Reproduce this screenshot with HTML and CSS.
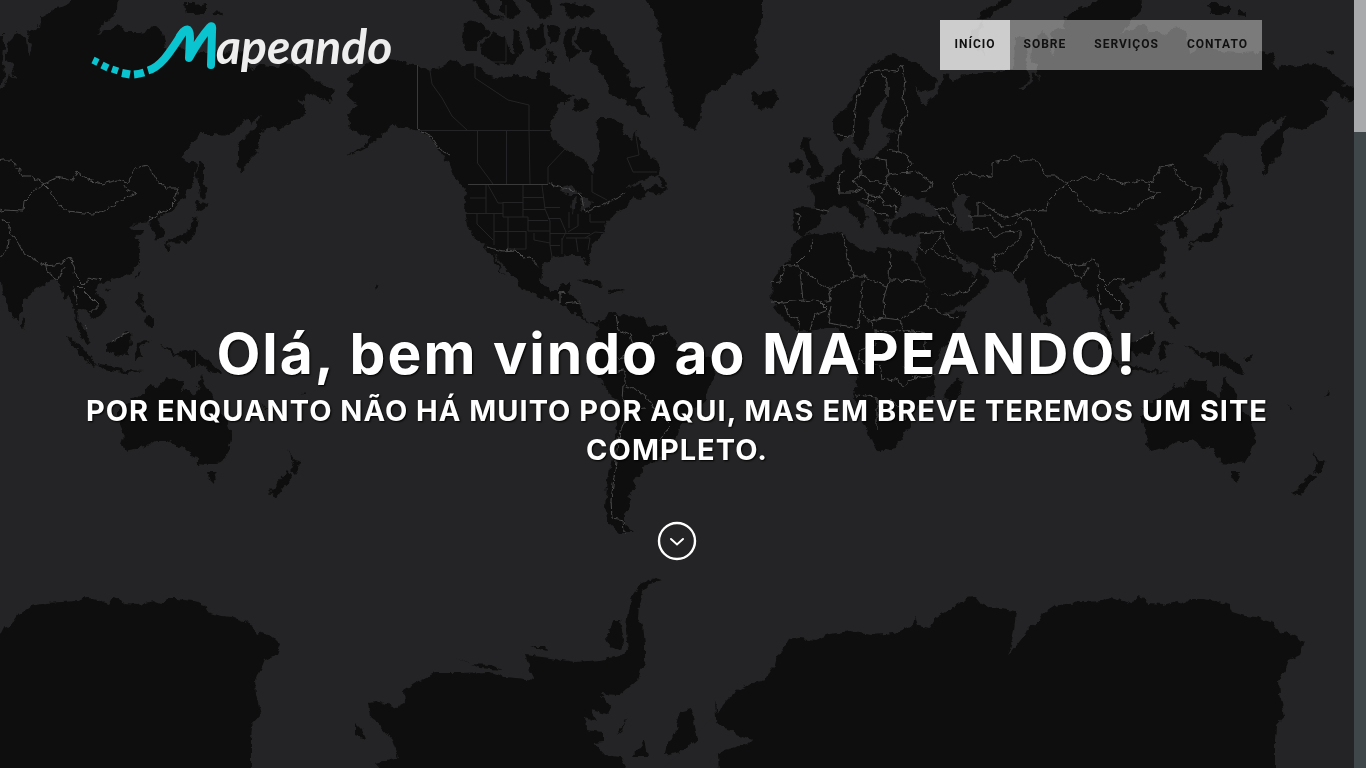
FILE: index.html
```html
<!DOCTYPE html>
<html lang="pt-BR">
<head>
<meta charset="utf-8">
<title>Mapeando</title>
<meta name="viewport" content="width=device-width, initial-scale=1">
<link rel="stylesheet" href="styles.css">
</head>
<body>
<div class="page">
  <div class="hero">
    <svg class="map" viewBox="0 0 1354 768" preserveAspectRatio="xMidYMin slice" aria-hidden="true">
      <defs>
        <filter id="coast" filterUnits="userSpaceOnUse" x="-20" y="-20" width="1400" height="810" color-interpolation-filters="sRGB">
          <feTurbulence type="fractalNoise" baseFrequency="0.13" numOctaves="3" seed="4" result="n"/>
          <feDisplacementMap in="SourceGraphic" in2="n" scale="8" xChannelSelector="R" yChannelSelector="G"/>
        </filter>
        <filter id="edge" filterUnits="userSpaceOnUse" x="-20" y="-20" width="1400" height="810" color-interpolation-filters="sRGB">
          <feTurbulence type="fractalNoise" baseFrequency="0.16" numOctaves="2" seed="9" result="n"/>
          <feDisplacementMap in="SourceGraphic" in2="n" scale="6" xChannelSelector="R" yChannelSelector="G"/>
        </filter>
        <g id="world" class="land">
          <!-- Eurasia -->
          <path d="M893 54L907 60 917 64 925 70 936 79 934 89 925 92 915 88 912 84 918 92 920 102 925 105 930 98 935 95 939 90 941 85 944 80 943 74 950 75 952 83 958 78 965 74 975 73 985 72 995 72 1005 70 1014 70 1015 37 1026 36 1028 48 1026 66 1030 74 1027 84 1018 88 1024 90 1032 82 1034 72 1040 80 1036 66 1030 60 1032 42 1042 32 1050 38 1052 58 1056 46 1050 32 1063 28 1064 18 1078 10 1092 4 1100-4 1143-4 1142 10 1132 20 1120 35 1135 28 1142 22 1150 32 1160 32 1168 34 1172 28 1180 27 1186 32 1188 42 1190 53 1195 52 1200 47 1210 48 1225 52 1240 53 1262 52 1273 55 1274 64 1278 70 1285 65 1295 66 1302 67 1305 62 1315 63 1325 67 1335 75 1345 85 1350 84 1359 93 1352 103 1343 97 1333 92 1327 100 1320 101 1328 107 1328 115 1318 120 1310 125 1302 130 1298 127 1290 128 1283 132 1283 142 1280 155 1270 165 1265 175 1262 160 1262 147 1270 137 1280 127 1286 115 1280 118 1275 124 1270 120 1262 125 1257 134 1250 136 1240 134 1225 134 1217 142 1205 157 1212 162 1218 162 1221 168 1218 182 1207 200 1195 210 1188 213 1181 218 1186 228 1187 237 1180 240 1177 230 1175 222 1165 223 1155 226 1163 219 1154 226 1158 230 1168 230 1160 237 1165 250 1164 260 1157 270 1145 278 1133 281 1127 284 1122 283 1120 290 1128 300 1130 308 1125 315 1117 320 1112 312 1106 308 1102 310 1101 318 1108 328 1113 338 1112 345 1105 335 1100 325 1099 310 1094 295 1088 298 1083 285 1078 280 1070 283 1058 292 1047 300 1047 310 1040 322 1033 310 1027 292 1026 280 1020 284 1012 276 1005 270 995 271 985 270 978 265 970 262 960 258 955 254 958 262 965 272 975 277 979 268 985 277 988 281 980 293 968 303 955 309 943 313 940 308 930 290 922 275 915 262 917 255 919 245 920 233 912 237 905 234 895 235 890 230 893 220 900 217 915 213 930 216 940 215 935 208 925 200 928 194 918 200 905 195 901 203 899 212 895 216 885 218 890 228 886 235 880 230 876 220 873 212 866 205 860 200 856 200 862 208 870 218 863 222 862 228 858 222 850 212 845 205 838 208 830 207 822 215 818 224 810 232 803 236 795 232 793 222 794 208 805 207 815 208 816 200 812 191 807 187 815 184 822 180 830 174 835 168 842 165 842 155 845 148 850 145 852 155 862 159 875 158 880 150 890 143 888 135 895 131 903 129 890 130 882 128 880 115 888 103 888 95 882 98 876 108 870 118 868 135 862 150 857 150 853 137 848 137 840 141 834 133 834 117 845 110 855 95 862 77 870 66 880 60Z"/>
          <!-- Africa and Madagascar -->
          <path d="M803 236L830 234 843 232 848 240 860 248 872 253 878 247 890 249 908 252 913 256 912 260 920 275 932 293 940 308 945 314 958 312 966 311 960 325 950 340 938 355 932 370 935 385 934 395 920 405 912 415 911 425 903 435 895 447 880 450 873 445 867 430 858 410 853 395 858 375 852 360 848 350 845 335 838 328 825 328 810 331 800 332 790 325 780 315 772 302 771 283 780 268 790 258 793 245ZM961 380L962 390 955 402 948 402 944 395 950 385Z"/>
          <!-- South America -->
          <path d="M600 322L610 312 625 315 640 317 650 325 665 328 673 335 676 348 690 352 705 355 717 363 715 375 708 388 705 402 692 410 685 420 680 430 670 445 660 455 655 463 642 465 640 475 633 480 635 490 627 495 632 500 625 515 625 525 634 533 620 533 608 522 605 505 608 480 613 450 618 420 617 400 605 388 595 370 594 360 600 345 597 335Z"/>
          <!-- North America -->
          <path d="M370 62L385 58 405 62 418 65 430 71 440 68 455 60 462 67 475 65 490 76 505 79 515 72 525 78 535 78 540 70 550 72 550 84 562 90 572 96 565 104 560 103 558 110 552 120 550 130 552 140 562 147 575 154 585 158 588 170 592 175 594 165 600 150 597 135 598 118 610 118 620 122 625 135 632 140 636 130 642 148 655 160 660 172 650 178 635 182 625 190 640 184 645 190 655 184 668 190 664 194 648 192 640 200 632 198 628 205 618 212 607 220 603 235 590 247 588 255 591 267 587 268 582 255 570 255 555 257 543 265 541 280 548 290 558 290 562 283 571 283 567 292 580 302 581 315 590 322 600 322 596 326 580 318 565 306 555 300 540 297 522 288 515 278 500 262 492 250 500 268 508 278 498 268 486 247 475 240 467 225 464 210 466 190 455 178 448 165 440 150 428 135 415 130 402 127 392 125 383 134 370 145 355 153 345 157 360 148 372 137 352 130 348 115 358 105 345 95 355 85 348 80 358 70Z"/>
          <!-- Greenland, Iceland, British Isles -->
          <path d="M642-4L655 15 660 35 665 60 668 85 675 110 685 125 696 131 700 115 705 95 720 88 730 78 745 72 757 60 755 40 762 20 762-4ZM750 93L755 90 758 97 765 92 775 90 780 99 772 107 762 109 754 104ZM803 137L811 138 812 150 818 160 824 168 822 176 810 179 807 172 812 166 805 155 801 146ZM790 165L798 157 802 163 800 171 791 173Z"/>
          <!-- Arctic archipelago -->
          <path d="M466 22L480 21 490 33 480 40 475 50 464 50 462 42ZM480 45L494 32 505 37 510 52 518 55 514 65 495 63 482 55ZM513 28L520 34 523 48 519 57 512 46ZM528 30L543 25 545 45 536 52 530 46ZM548 25L560 28 558 42 550 44ZM547 48L556 55 555 65 546 62ZM566 30L575 26 572 45 580 52 570 62 564 46ZM580 28L600 30 608 40 615 55 628 70 630 85 643 88 636 96 642 105 650 118 640 112 622 98 610 95 608 82 600 70 590 62 592 50 582 52 576 42ZM470-4L485 0 490 12 505 18 490 20ZM500-4L515 2 520 12 512 20 500 10ZM525-4L550 0 552 16 540 18ZM560 2L590 5 594 14 570 19ZM574 100L584 97 590 108 580 112 572 110ZM660 182L656 172 664 180 668 190Z"/>
          <!-- Novaya Zemlya, Severnaya Zemlya -->
          <path d="M978 20L984 10 995 4 1008-3 1012 1 1000 8 990 18ZM983 20L978 38 986 56 976 48 970 34ZM1208 3L1215 3 1220 6 1230 4 1230 13 1218 14 1210 14ZM1236 11L1248 12 1246 16 1238 15ZM1327 51L1336 49 1336 53 1329 54Z"/>
          <!-- Japan, Sakhalin, Taiwan -->
          <path d="M1223 160L1227 165 1227 180 1231 194 1226 200 1224 195 1221 176ZM1221 201L1232 206 1224 212 1218 210ZM1220 215L1222 224 1218 236 1208 243 1198 242 1188 245 1196 238 1210 233ZM1188 244L1194 246 1190 251ZM1164 272L1161 279 1160 275ZM1128 288L1134 287 1131 291Z"/>
          <!-- Southeast Asia -->
          <path d="M1162 292L1167 293 1165 306 1171 312 1165 311 1160 302ZM1171 316L1179 322 1176 328 1168 323ZM1090 335L1100 342 1112 354 1120 363 1118 367 1104 355ZM1120 363L1135 366 1150 370 1170 371 1150 373 1128 370ZM1130 343L1140 340 1150 331 1154 334 1155 345 1150 355 1138 354 1130 350ZM1160 343L1174 342 1163 347 1168 358 1159 360ZM1185 345L1190 346 1200 354 1205 352 1215 350 1230 357 1247 375 1236 372 1225 366 1215 368 1208 358 1198 355ZM1242 361L1252 355 1250 361ZM1046 316L1051 323 1048 328 1045 325ZM1286 404L1294 410 1290 409ZM1324 397L1328 392 1330 394Z"/>
          <!-- Australia, New Zealand -->
          <path d="M1142 408L1148 403 1158 398 1167 394 1174 385 1182 387 1190 378 1200 380 1208 380 1206 389 1220 396 1225 376 1229 387 1233 390 1240 408 1251 420 1256 435 1252 450 1245 462 1233 464 1222 463 1213 452 1208 447 1203 448 1192 441 1178 441 1168 447 1150 451 1146 446 1148 436 1142 422ZM1231 472L1241 472 1237 483 1233 479ZM1311 450L1318 460 1326 462 1319 474 1315 470 1317 462ZM1312 472L1316 477 1307 488 1300 497 1292 493 1300 485Z"/>
          <!-- Caribbean, Hawaii -->
          <path d="M578 279L590 278 605 286 595 286ZM606 290L614 287 624 291 614 293ZM375 284L379 286 376 289Z"/>
          <!-- Caspian Sea, Great Lakes -->
          <path class="water" d="M957 195L969 195 965 205 972 215 972 230 962 232 957 220 952 205ZM558 190L572 186 580 194 570 194ZM572 198L577 197 573 213 570 208ZM580 198L590 198 592 204 582 212Z"/>
        </g>
        <g id="frontiers" class="border">
          <path d="M837 135L853 136 855 108 862 85 870 72 880 70 887 82 887 95M880 70L895 72 902 64 905 80 903 98 908 112 900 127 898 140 898 152 908 155 912 165 905 172M887 150L898 152M875 158L886 160 888 175 916 171 932 183 930 190 922 192M860 161L861 175 869 180 886 184 888 175M842 170L838 185 839 193 854 193 862 188 853 180 861 175M862 188L870 195 880 196 886 184 896 190 904 198M880 196L885 205 895 206 897 212M870 195L866 205 873 210 880 215 890 216M862 198L873 202 880 196M815 208L828 211M795 213L800 214 798 230"/>
          <path d="M935 208L948 210 955 218 950 225 944 222 938 215M920 233L944 231 945 240 953 255M944 231L935 243 925 255 919 248M930 248L944 257 957 259M941 295L955 294 968 291 977 279M957 195L952 183 960 175 970 173 980 177 992 176 992 163 1005 160 1015 155 1022 161 1028 160 1036 160 1047 176 1056 176 1067 184 1082 177 1097 181 1101 172 1110 179 1125 184 1142 180 1152 183 1160 168 1172 165 1182 182 1192 188 1202 188 1198 202 1190 210 1172 220M1067 184L1075 192 1080 201 1092 211 1117 214 1135 208 1145 200 1160 193 1150 190 1148 184M1067 184L1057 192 1048 201 1047 211 1028 210 1015 215 1005 218 990 208 978 201 978 216 968 216M978 216L990 216 1003 228 1013 225 1020 217 1032 222 1035 233 1042 243 1048 254 1070 266 1085 264 1093 258 1098 265 1100 278 1107 285 1115 278 1125 280M972 230L988 228 993 237 1003 232 1020 231 1020 238 1005 252 993 257 996 270M1033 239L1032 249 1020 262 1015 273M1070 262L1072 272 1083 280 1088 267M1097 285L1101 305M1103 286L1110 293 1122 305 1122 310 1112 310M1108 325L1110 328M1135 342L1145 336 1153 332"/>
          <path d="M771 283L780 282 784 265 795 265 812 248 813 238M795 265L829 289 854 276 847 258 845 245 842 233M829 289L831 300 820 302 803 300 800 272M771 301L784 302 803 300M854 276L864 276 887 287 889 280 890 250M890 280L925 281M864 276L860 305 868 320 885 318 883 300 887 287M831 306L828 323 858 328 860 305M885 318L900 320 912 312 925 305 928 293M900 320L905 330 925 333 925 350M925 305L945 315 958 318M868 320L875 330 890 332 905 330M875 330L876 345 860 350 858 360 880 365 882 378 895 380 905 385 918 375M855 395L877 397 877 430M890 400L905 410 905 420M820 302L828 310 815 315 810 330M784 302L788 315 800 320 798 332M903 365L915 378 935 375"/>
          <path d="M615 315L618 330 630 335 635 348 620 360 610 352M635 348L650 345 655 335 668 332M612 372L625 370 625 385 645 395 655 410 670 425 660 440M623 385L622 400 628 410 645 408M628 410L618 440 615 470 611 500 612 518 623 520 624 533"/>
          <path d="M418 129L432 137 440 150 450 155M549 184L562 188 575 190 583 198 585 212 600 206 612 200 622 195 626 192M486 247L503 251 515 250 523 258 530 257 540 268M560 303L560 293 566 292M565 304L580 302"/>
        </g>
        <g id="pole" class="land">
          <path d="M720 790L715 700 720 725 716 718 722 705 735 692 750 684 765 680 771 670 776 665 778 657 788 640 800 638 815 640 830 634 850 631 870 635 885 634 900 632 913 626 915 617 918 625 929 628 935 618 952 608 962 602 966 598 975 597 980 603 990 608 1016 611 1014 630 1010 650 1008 657 1012 650 1024 635 1028 627 1036 624 1043 614 1055 606 1070 603 1085 602 1103 601 1110 597 1120 600 1132 604 1137 597 1145 599 1148 604 1162 605 1177 601 1185 604 1190 599 1202 599 1215 601 1229 605 1232 612 1245 616 1256 617 1273 623 1280 634 1287 632 1297 637 1304 644 1300 655 1289 660 1285 670 1279 680 1280 695 1285 715 1276 725 1275 740 1275 790Z"/>
          <path d="M400 790L375 763 398 757 392 740 375 720 370 716 368 702 378 701 395 708 405 703 404 690 420 680 435 673 460 673 490 672 505 677 535 680 528 665 525 655 550 658 575 662 600 660 620 656 628 650 626 630 628 610 632 597 640 585 655 578 662 580 650 584 642 592 639 605 638 618 643 625 645 645 645 660 638 680 620 695 600 694 612 708 606 714 590 710 598 722 585 717 586 730 602 732 602 742 594 743 605 755 620 757 640 790ZM614 620L620 620 624 640 620 650 610 646 606 638ZM616 735L628 717 622 730ZM632 757L645 740 648 757ZM355 723L362 730 366 739 355 735ZM530 646L545 646 547 651ZM455 657L470 664 490 665 502 670 480 668Z"/>
        </g>
      </defs>
      <g filter="url(#coast)">
        <use href="#world"/>
        <use href="#world" x="-1024"/>
      </g>
      <g filter="url(#edge)">
        <use href="#frontiers"/>
        <use href="#frontiers" x="-1024"/>
        <use href="#pole"/>
        <use href="#pole" x="-1024"/>
        <path class="water" d="M712 718L723 728 733 730 736 735 752 740 748 744 725 750 712 758 695 772 660 772Z"/>
        <path class="land" d="M680 712L690 709 695 720 693 722 697 740 680 752 665 756 667 743 675 735Z"/>
      </g>
      <g class="province">
        <path class="strong" d="M417.500 65V129M468 184.500H548"/>
        <path d="M418 130.500H550M430 71L432 84 442 98 452 116 467 130M475 65V78L508 100 529 105V130L530 184M477.500 131V163L493 184M506.500 131V184M506 5V62H475M566 148L548 167V184M592 175V192L607 200M635 130L639 155 627 158 633 172H657"/>
        <path d="M470 198H486M486 185V213M465 213.500H503M488 185L498 203H503M523 185V217M503 202.500H523M503 202V217H528M477 213V224L493 240M494 213V245M494 231.500H526M508 217V249M523 197.500H544M523 209.500H545M528 217V231H550M542 185L545 209 550 221V245L552 257M528 220.500H548M526 231V249H508M534 233V240L550 243M545 207.500H560M548 218.500H560M550 233.500H590M550 245.500H560M569 212V228M578 214V226L568 232M590 214V222H605M585 238L595 232 608 233M562 238V254M576 238L578 252M566 238H590L588 250M560 218L566 232 562 240"/>
        <path d="M195.500 352V371M1219.500 352V371"/>
      </g>
    </svg>

    <header class="bar">
      <a class="logo" href="#inicio" aria-label="Mapeando">
        <svg class="logo-art" viewBox="0 0 300 64" aria-hidden="true">
          <g fill="none" stroke="#0ac5d0" stroke-linejoin="round">
            <path stroke-width="7" d="M1 40L6 42.500M10 45L16 48M20 49L26 51"/>
            <path stroke-width="8" d="M30 53L38 54.500M42 54.500Q47 54 52 52.500"/>
            <path stroke-width="8" d="M56 50.500C72 46 83 23 92 11"/>
            <path stroke-width="8" stroke-linecap="round" d="M88 16C94 7 98 7 98 18L97 38C102 29 110 16 118 7Q121 4 120 12L119 45"/>
          </g>
          <text class="logo-word" x="124" y="44">apeando</text>
        </svg>
      </a>
      <nav class="menu" aria-label="Principal">
        <a class="menu-link active" href="#inicio">INÍCIO</a>
        <a class="menu-link" href="#sobre">SOBRE</a>
        <a class="menu-link" href="#servicos">SERVIÇOS</a>
        <a class="menu-link" href="#contato">CONTATO</a>
      </nav>
    </header>

    <main class="intro" id="inicio">
      <h1 class="title">Olá, bem vindo ao MAPEANDO!</h1>
      <h2 class="subtitle">POR ENQUANTO NÃO HÁ MUITO POR AQUI, MAS EM BREVE TEREMOS UM SITE COMPLETO.</h2>
      <a class="down" href="#sobre" aria-label="Ver mais">
        <svg viewBox="0 0 40 40" width="40" height="40" fill="none" stroke="#fff" aria-hidden="true">
          <circle cx="20" cy="20" r="18" stroke-width="2.400"/>
          <path d="M14 18L20 23.500 26 18" stroke-width="2" stroke-linecap="round"/>
        </svg>
      </a>
    </main>
  </div>
  <div class="scroll-track"><div class="scroll-thumb"></div></div>
</div>
</body>
</html>
```
FILE: styles.css
```css
* { box-sizing: border-box; }

body {
  margin: 0;
  background: #242426;
  color: #fff;
  font-family: Inter, "Liberation Sans", sans-serif;
}

.page {
  display: flex;
  min-height: 100vh;
}

.hero {
  position: relative;
  flex: 1;
  min-width: 0;
  overflow: hidden;
}

.map {
  position: absolute;
  inset: 0;
  width: 100%;
  height: 100%;
}

.land { fill: #0e0e0e; }
.water { fill: #242426; }
.border { fill: none; stroke: #4c4c4d; stroke-width: 1; }
.province { fill: none; stroke: #242426; stroke-width: 1; }
.strong { stroke: #3a3a3b; }

.bar {
  position: relative;
  display: flex;
  justify-content: space-between;
  align-items: flex-start;
  max-width: 1170px;
  margin: 0 auto;
  padding-top: 20px;
}

.logo { display: block; }

.logo-art {
  display: block;
  width: 300px;
  height: 64px;
  overflow: visible;
}

.logo-word {
  fill: #eee;
  font: italic 700 48px Lato, sans-serif;
}

.menu {
  display: flex;
  background: rgba(255, 255, 255, 0.4);
}

.menu-link {
  padding: 0 14px 2px;
  color: #111;
  font: 700 12px/48px Roboto, sans-serif;
  letter-spacing: 1px;
  text-decoration: none;
}

.menu-link.active { background: rgba(255, 255, 255, 0.62); }

.intro {
  position: relative;
  display: flex;
  flex-direction: column;
  align-items: center;
  padding: 236px 70px 0;
  text-align: center;
  text-shadow: 1px 1px 2px #000;
}

.title {
  margin: 0;
  font-size: 57px;
  font-weight: 700;
  line-height: 68px;
  letter-spacing: 2px;
}

.subtitle {
  margin: 3px 0 0;
  font-size: 29px;
  font-weight: 700;
  line-height: 39px;
  letter-spacing: 1px;
}

.down {
  display: block;
  height: 40px;
  margin-top: 52px;
}

.scroll-track {
  width: 12px;
  background: #40474a;
}

.scroll-thumb {
  height: 132px;
  background: #a9aaac;
}
```
